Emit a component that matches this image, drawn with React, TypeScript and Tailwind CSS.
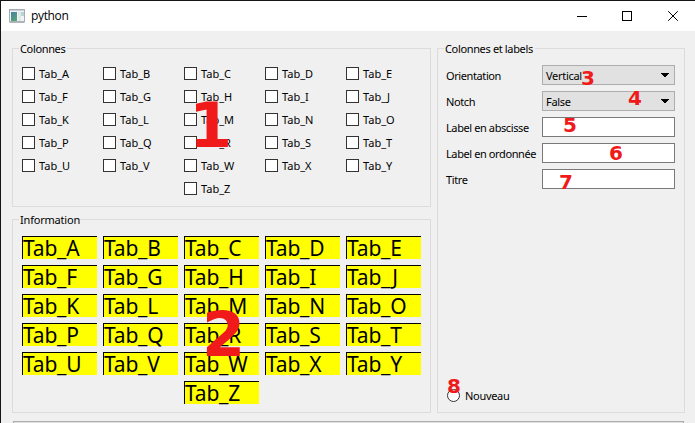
import type { ReactNode } from "react";

const columns = ["AFKPU", "BGLQV", "CHMRWZ", "DINSX", "EJOTY"];

const ui = "font-['Noto_Sans',sans-serif]";

function Group({ title, size, legend, children }: { title: string; size: string; legend: string; children: ReactNode }) {
  return (
    <fieldset className={`min-w-0 border border-[#dcdcdc] ${size}`}>
      <legend className={`ml-[6px] h-[13px] whitespace-nowrap pl-px text-[11px] leading-[14px] ${legend}`}>{title}</legend>
      {children}
    </fieldset>
  );
}

function Mark({ n, place }: { n: string; place: string }) {
  return (
    <span className={`absolute font-['DejaVu_Sans',sans-serif] font-bold leading-none text-[#f01a1a] ${place}`}>
      {n}
    </span>
  );
}

function Row({ label, children }: { label: string; children: ReactNode }) {
  return (
    <div className="flex h-5 items-center">
      <span className="w-[96px] whitespace-nowrap tracking-[-0.4px]">{label}</span>
      {children}
    </div>
  );
}

function Combo({ value }: { value: string }) {
  return (
    <div className="flex h-5 w-[133px] items-center justify-between border border-[#adadad] bg-[#e1e1e1] pl-[3px] pr-[5px]">
      <span className="tracking-[-0.3px]">{value}</span>
      <svg width="8" height="5" viewBox="0 0 8 5" shapeRendering="crispEdges">
        <path d="M0 0h8v1H7v1H6v1H5v1H3V3H2V2H1V1H0z" />
      </svg>
    </div>
  );
}

function Field() {
  return <div className="h-5 w-[133px] border border-[#7a7a7a] bg-white" />;
}

export default function App() {
  return (
    <div className={`relative h-[423px] w-[695px] overflow-hidden border-l border-t border-[#151515] bg-[#f0f0f0] text-[11px] leading-[13px] text-black ${ui}`}>
      <header className="flex h-[30px] items-center bg-white pl-2">
        <svg width="16" height="14" viewBox="0 0 16 14" className="-mt-px">
          <defs>
            <linearGradient id="pane" x1="0" y1="0" x2="0.7" y2="1">
              <stop offset="0" stopColor="#4b7eaa" />
              <stop offset="1" stopColor="#52a675" />
            </linearGradient>
          </defs>
          <rect x=".5" y=".5" width="15" height="12.5" fill="#f1f3f5" stroke="#a5adb3" />
          <path d="M1 1h14v1H1z" fill="#c9d0d5" />
          <rect x="2" y="3" width="6" height="9" fill="url(#pane)" />
          <rect x="9" y="3" width="3" height="9" fill="#e1e7ea" />
          <rect x="12" y="3" width="3" height="4" fill="#b5d7cd" />
          <path d="M1 13h14" stroke="#8c9499" />
        </svg>
        <span className="ml-[6px] font-['Open_Sans','Noto_Sans',sans-serif] text-[12px] leading-4 tracking-[-0.35px]">python</span>
        <svg className="ml-auto mr-[15px]" width="103" height="12" viewBox="0 0 103 12" fill="none" stroke="#000">
          <path d="M0 6.5h10M45.5 1.5h9v9h-9z" shapeRendering="crispEdges" />
          <path d="M91.2 1.2l9.6 9.6M100.8 1.2l-9.6 9.6" />
        </svg>
      </header>

      <main className="flex gap-[6px] pl-[11px] pt-[11px]">
        <div className="flex flex-col gap-[6px]">
          <Group title="Colonnes" size="h-[165px] w-[419px]" legend="w-[48px] tracking-[-0.35px]">
            <div className="flex pl-[9px] pt-3">
              {columns.map((column) => (
                <div key={column} className="flex w-[81px] flex-col gap-[10px]">
                  {[...column].map((letter) => (
                    <label key={letter} className="flex h-[13px] items-center">
                      <span className="size-[13px] border border-[#333] bg-white" />
                      <span className="ml-1 pb-px">Tab_{letter}</span>
                    </label>
                  ))}
                </div>
              ))}
            </div>
          </Group>
          <Group title="Information" size="h-[200px] w-[419px]" legend="w-[58px] tracking-[-0.2px]">
            <div className="flex gap-[6px] pl-[9px] pt-[10px]">
              {columns.map((column) => (
                <div key={column} className="flex w-[75px] flex-col gap-[6px]">
                  {[...column].map((letter) => (
                    <div key={letter} className="h-[23px] border-l border-t border-black bg-[#ff0] text-[21px] leading-[22px] tracking-[-0.2px]">
                      Tab_{letter}
                    </div>
                  ))}
                </div>
              ))}
            </div>
          </Group>
        </div>

        <Group title="Colonnes et labels" size="h-[371px] w-[248px]" legend="w-[91px] tracking-[-0.35px]">
          <div className="flex h-[347px] flex-col gap-[6px] pl-2 pt-[10px]">
            <Row label="Orientation"><Combo value="Vertical" /></Row>
            <Row label="Notch"><Combo value="False" /></Row>
            <Row label="Label en abscisse"><Field /></Row>
            <Row label="Label en ordonnée"><Field /></Row>
            <Row label="Titre"><Field /></Row>
            <label className="mt-auto flex h-[13px] items-center pl-px">
              <span className="size-[13px] rounded-full border border-[#333] bg-white" />
              <span className="ml-[5px] pb-px tracking-[-0.3px]">Nouveau</span>
            </label>
          </div>
        </Group>
      </main>
      <div className="ml-3 mt-2 h-5 w-[671px] border border-[#adadad] bg-[#e1e1e1]" />

      <Mark n="1" place="left-[188px] top-[94px] text-[62px]" />
      <Mark n="2" place="left-[201px] top-[303px] text-[62px]" />
      <Mark n="3" place="left-[580px] top-[67px] text-[20px]" />
      <Mark n="4" place="left-[627px] top-[87px] text-[20px]" />
      <Mark n="5" place="left-[562px] top-[114px] text-[20px]" />
      <Mark n="6" place="left-[608px] top-[142px] text-[20px]" />
      <Mark n="7" place="left-[558px] top-[171px] text-[20px]" />
      <Mark n="8" place="left-[446px] top-[375px] text-[20px]" />
    </div>
  );
}
